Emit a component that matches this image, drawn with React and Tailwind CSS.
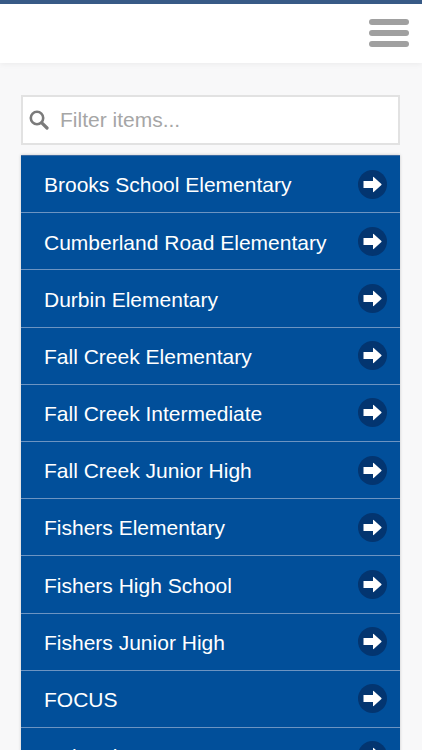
import React from "react";

const SCHOOLS = [
  "Brooks School Elementary",
  "Cumberland Road Elementary",
  "Durbin Elementary",
  "Fall Creek Elementary",
  "Fall Creek Intermediate",
  "Fall Creek Junior High",
  "Fishers Elementary",
  "Fishers High School",
  "Fishers Junior High",
  "FOCUS",
  "Geist Elementary",
];

function ArrowBadge() {
  return (
    <span className="flex h-[29px] w-[29px] shrink-0 items-center justify-center rounded-full bg-[#033570]">
      <svg width="19" height="17" viewBox="0 0 19 17" fill="#ffffff">
        <path d="M0.5 5 H10 V1.2 Q10 0.6 10.7 1 L18.4 8 Q18.8 8.5 18.4 9 L10.7 16 Q10 16.4 10 15.8 V12 H0.5 Z" />
      </svg>
    </span>
  );
}

export default function App() {
  return (
    <div className="flex h-[750px] flex-col overflow-hidden bg-[#f8f8f9] font-['Liberation_Sans',Arial,sans-serif]">
      <header className="h-[63px] shrink-0 border-t-4 border-[#385a86] bg-white shadow-[0_1px_6px_rgba(0,0,0,0.06)]">
        <div className="flex h-full flex-col items-end justify-center gap-[5px] pr-[13px] pb-[1px]">
          <span className="h-[6px] w-[40px] rounded-full bg-[#a0a0a0]" />
          <span className="h-[6px] w-[40px] rounded-full bg-[#a0a0a0]" />
          <span className="h-[6px] w-[40px] rounded-full bg-[#a0a0a0]" />
        </div>
      </header>

      <main className="pt-[32px] pr-[22px] pl-[21px]">
        <div className="flex h-[50px] items-center border-2 border-[#e2e2e2] bg-white pl-[6px]">
          <svg width="20" height="20" viewBox="0 0 20 20" fill="none" stroke="#7b7b7b" strokeWidth="2.6" strokeLinecap="round" className="shrink-0">
            <circle cx="8" cy="8" r="6.2" />
            <path d="M12.8 12.8 L18 18" strokeWidth="3.2" />
          </svg>
          <input
            placeholder="Filter items..."
            className="ml-[11px] w-full bg-transparent text-[21px] outline-none placeholder:text-[#a6a6a6]"
          />
        </div>

        <ul className="mt-[10px] border-t border-[#3b6ba3] bg-[#014f9a] shadow-[0_0_3px_rgba(0,0,0,0.2)]">
          {SCHOOLS.map((name) => (
            <li
              key={name}
              className="flex h-[57.2px] items-center justify-between border-b border-[#6c94c2] pr-[13px] pl-[23px] text-[21px] text-white"
            >
              <span className="translate-y-px">{name}</span>
              <ArrowBadge />
            </li>
          ))}
        </ul>
      </main>
    </div>
  );
}
